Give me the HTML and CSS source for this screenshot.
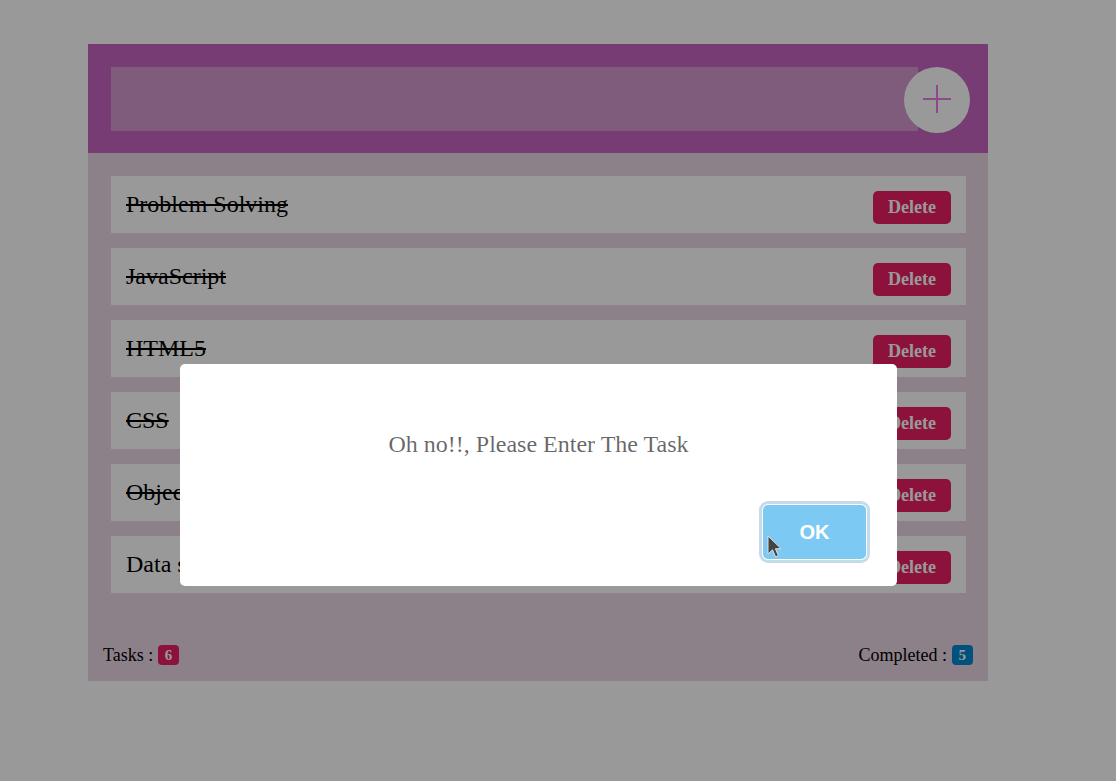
FILE: index.html
```html
<!DOCTYPE html>
<html>
<head>
<meta charset="utf-8">
<link rel="stylesheet" href="styles.css">
</head>
<body>
<div class="app">
  <div class="header">
    <div class="input"></div>
    <div class="add"><span class="plus"></span></div>
  </div>
  <div class="list">
    <div class="task done"><span class="name">Problem Solving</span><span class="del">Delete</span></div>
    <div class="task done"><span class="name">JavaScript</span><span class="del">Delete</span></div>
    <div class="task done"><span class="name">HTML5</span><span class="del">Delete</span></div>
    <div class="task done"><span class="name">CSS</span><span class="del">Delete</span></div>
    <div class="task done"><span class="name">Object Oriented Programming</span><span class="del">Delete</span></div>
    <div class="task"><span class="name">Data structures</span><span class="del">Delete</span></div>
  </div>
  <div class="footer">
    <span>Tasks : <span class="badge pink">6</span></span>
    <span>Completed : <span class="badge blue">5</span></span>
  </div>
</div>
<div class="overlay"></div>
<div class="modal">
  <div class="msg">Oh no!!, Please Enter The Task</div>
  <div class="actions"><span class="ok">OK</span></div>
</div>
<svg class="cursor" width="16" height="24" viewBox="0 0 16 24"><path d="M1 1 L1 19 L5.5 14.8 L8.6 21.8 L11.4 20.6 L8.4 13.8 L14 13.6 Z" fill="#444" stroke="#ddd" stroke-width="1"/></svg>
</body>
</html>
```
FILE: styles.css
```css
html, body { margin: 0; padding: 0; }
body { background: #fff; font-family: "Liberation Serif", serif; width: 1116px; height: 781px; overflow: hidden; }
.app { width: 900px; margin: 44px 0 0 88px; background: #e9d5e4; }
.header { background: #c665c0; padding: 23px 18px 20px 23px; display: flex; align-items: flex-start; }
.input { flex: 1; height: 64px; background: #d499cf; margin-right: -14px; }
.add { width: 66px; height: 66px; border-radius: 50%; background: #fff; position: relative; }
.plus::before, .plus::after { content: ""; position: absolute; background: #e87ce4; }
.plus::before { left: 19px; top: 31px; width: 28px; height: 2px; }
.plus::after { left: 32px; top: 18px; width: 2px; height: 28px; }
.list { padding: 23px 22px 0 23px; display: flex; flex-direction: column; gap: 15px; }
.task { background: #fff; height: 57px; display: flex; align-items: center; justify-content: space-between; padding: 0 15px; font-size: 24px; color: #000; }
.task.done .name { text-decoration: line-through; }
.del { background: #e91e63; color: #fff; font-weight: bold; font-size: 18px; width: 78px; height: 33px; margin-top: 6px; border-radius: 5px; display: flex; align-items: center; justify-content: center; }
.footer { display: flex; justify-content: space-between; padding: 50px 15px 14px; font-size: 18px; line-height: 24px; }
.badge { display: inline-block; color: #fff; font-size: 15px; font-weight: bold; line-height: 20px; padding: 0 7px; border-radius: 4px; vertical-align: 1px; }
.pink { background: #e91e63; }
.blue { background: #0288d1; }
.overlay { position: fixed; inset: 0; background: rgba(0,0,0,0.4); z-index: 5; }
.modal { position: absolute; z-index: 6; left: 180px; top: 364px; width: 717px; height: 222px; background: #fff; border-radius: 5px; display: flex; flex-direction: column; }
.msg { text-align: center; font-size: 24px; color: rgba(0,0,0,0.6); margin-top: 66px; line-height: 28px; }
.actions { display: flex; justify-content: flex-end; padding: 47px 31px 0 0; }
.ok { width: 103px; height: 54px; background: #7ccaf3; border-radius: 5px; color: #fff; font-family: "Liberation Sans", sans-serif; font-weight: bold; font-size: 20px; display: flex; align-items: center; justify-content: center; box-shadow: 0 0 0 1px #fff, 0 0 0 4px #c6dbe9; }
.cursor { position: absolute; z-index: 7; left: 767px; top: 535px; }
```
